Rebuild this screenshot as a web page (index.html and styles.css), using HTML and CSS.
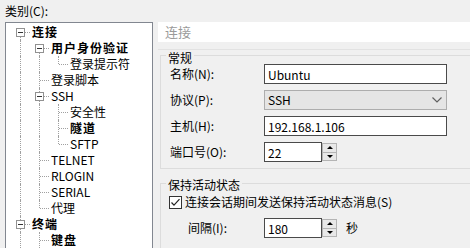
FILE: index.html
```html
<!DOCTYPE html>
<html lang="zh-CN">
<head>
    <meta charset="UTF-8">
    <title>会话属性</title>
    <link rel="stylesheet" href="styles.css">
</head>
<body>
    <div class="dialog">
        <div class="side">
            <div class="side-label">类别(C):</div>
            <div class="tree">
                <div class="row"><span class="g bx down"><i class="box"></i></span><span class="node bold">连接</span></div>
                <div class="row"><span class="g v"></span><span class="g bx down"><i class="box"></i></span><span class="node bold">用户身份验证</span></div>
                <div class="row"><span class="g v"></span><span class="g v"></span><span class="g l"></span><span class="node">登录提示符</span></div>
                <div class="row"><span class="g v"></span><span class="g t"></span><span class="node">登录脚本</span></div>
                <div class="row"><span class="g v"></span><span class="g bx up down"><i class="box"></i></span><span class="node">SSH</span></div>
                <div class="row"><span class="g v"></span><span class="g v"></span><span class="g t"></span><span class="node">安全性</span></div>
                <div class="row"><span class="g v"></span><span class="g v"></span><span class="g t"></span><span class="node bold">隧道</span></div>
                <div class="row"><span class="g v"></span><span class="g v"></span><span class="g l"></span><span class="node">SFTP</span></div>
                <div class="row"><span class="g v"></span><span class="g t"></span><span class="node">TELNET</span></div>
                <div class="row"><span class="g v"></span><span class="g t"></span><span class="node">RLOGIN</span></div>
                <div class="row"><span class="g v"></span><span class="g t"></span><span class="node">SERIAL</span></div>
                <div class="row"><span class="g v"></span><span class="g l"></span><span class="node">代理</span></div>
                <div class="row"><span class="g bx up down"><i class="box"></i></span><span class="node bold">终端</span></div>
                <div class="row"><span class="g v"></span><span class="g t"></span><span class="node bold">键盘</span></div>
            </div>
        </div>

        <div class="main">
            <div class="main-head">连接</div>
            <div class="main-sep"></div>

            <div class="group">
                <div class="group-title">常规</div>
                <div class="field">
                    <label class="field-label">名称(N):</label>
                    <input class="text" type="text" value="Ubuntu">
                </div>
                <div class="field">
                    <label class="field-label">协议(P):</label>
                    <div class="select">
                        <span>SSH</span>
                        <svg width="10" height="6" viewBox="0 0 10 6"><polyline points="0.5,0.5 5,5 9.5,0.5" fill="none" stroke="#606060" stroke-width="1.2"/></svg>
                    </div>
                </div>
                <div class="field">
                    <label class="field-label">主机(H):</label>
                    <input class="text" type="text" value="192.168.1.106">
                </div>
                <div class="field">
                    <label class="field-label">端口号(O):</label>
                    <input class="text short" type="text" value="22">
                    <div class="spin"><span class="spin-up"></span><span class="spin-down"></span></div>
                </div>
            </div>

            <div class="group group-keep">
                <div class="group-title">保持活动状态</div>
                <div class="check-row">
                    <svg class="check" width="13" height="13" viewBox="0 0 13 13">
                        <rect x="0.5" y="0.5" width="12" height="12" fill="#fff" stroke="#333"/>
                        <polyline points="2.5,6.5 5,9.2 10.5,3.2" fill="none" stroke="#222" stroke-width="1.2"/>
                    </svg>
                    <span>连接会话期间发送保持活动状态消息(S)</span>
                </div>
                <div class="field field-sub">
                    <label class="field-label">间隔(I):</label>
                    <input class="text short" type="text" value="180">
                    <div class="spin"><span class="spin-up"></span><span class="spin-down"></span></div>
                    <span class="unit">秒</span>
                </div>
            </div>
        </div>
    </div>
</body>
</html>
```

FILE: styles.css
```css
body {
    margin: 0;
    background-color: #f0f0f0;
    font-family: "Noto Sans CJK SC", sans-serif;
    font-size: 12px;
    line-height: 16px;
    color: #000;
    overflow: hidden;
}

.dialog {
    display: flex;
    width: 470px;
    height: 248px;
    overflow: hidden;
}

/* left: category tree */
.side {
    width: 148px;
    margin-left: 5px;
    flex: none;
}

.side-label {
    height: 22px;
    line-height: 21px;
}

.tree {
    height: 240px;
    background-color: #fff;
    border: 1px solid #828790;
    padding: 1px 0 0 5px;
    overflow: hidden;
}

.row {
    display: flex;
    align-items: center;
    height: 16px;
}

.g {
    position: relative;
    width: 19px;
    height: 16px;
    flex: none;
}

/* dotted guide lines */
.g::before,
.g::after {
    content: "";
    position: absolute;
}

.g.v::before,
.g.t::before,
.g.l::before,
.g.bx.up::before,
.g.bx.down::before {
    left: 9px;
    top: 0;
    bottom: 0;
    border-left: 1px dotted #a0a0a0;
}

.g.l::before {
    bottom: 8px;
}

.g.bx.down::before {
    top: 8px;
}

.g.bx.up.down::before {
    top: 0;
}

.g.t::after,
.g.l::after,
.g.bx::after {
    left: 10px;
    top: 8px;
    width: 9px;
    border-top: 1px dotted #a0a0a0;
}

.box {
    position: absolute;
    left: 5px;
    top: 4px;
    width: 7px;
    height: 7px;
    border: 1px solid #919191;
    background-color: #fff;
    z-index: 1;
}

.box::after {
    content: "";
    position: absolute;
    left: 1px;
    top: 3px;
    width: 5px;
    height: 1px;
    background-color: #333;
}

.node {
    margin-left: 2px;
    white-space: nowrap;
}

.node.bold {
    font-weight: 700;
    letter-spacing: 1px;
}

/* right: settings page */
.main {
    flex: 1;
    margin-left: 5px;
    padding-top: 22px;
    min-width: 0;
}

.main-head {
    height: 20px;
    line-height: 20px;
    padding-left: 7px;
    background-color: #fff;
    color: #9a9a9a;
    font-size: 13px;
}

.main-sep {
    height: 1px;
    margin-top: 7px;
    background-color: #e2e2e2;
}

.group {
    margin: 5px -40px 0 2px;
    border: 1px solid #dcdcdc;
}

.group-keep {
    margin-top: 14px;
    height: 80px;
}

.group-title {
    width: fit-content;
    height: 13px;
    line-height: 13px;
    margin: -5px 0 0 5px;
    padding: 0 2px;
    background-color: #f0f0f0;
}

.group-keep .group-title {
    margin-top: -6px;
}

.field {
    display: flex;
    align-items: center;
    height: 20px;
    margin-bottom: 6px;
    padding-left: 9px;
}

.field-label {
    width: 94px;
    flex: none;
}

.field-sub {
    margin-top: 8px;
    padding-left: 27px;
}

.field-sub .field-label {
    width: 76px;
}

.text {
    width: 183px;
    height: 20px;
    box-sizing: border-box;
    margin: 0;
    padding: 0 3px;
    border: 1px solid #4a4a4a;
    background-color: #fff;
    font-family: inherit;
    font-size: 12px;
    color: #000;
    outline: none;
}

.text.short {
    width: 58px;
}

.select {
    display: flex;
    align-items: center;
    justify-content: space-between;
    width: 183px;
    height: 20px;
    box-sizing: border-box;
    padding: 0 4px 0 3px;
    border: 1px solid #adadad;
    background-color: #e5e5e5;
}

.spin {
    display: flex;
    flex-direction: column;
    width: 15px;
    height: 18px;
    box-sizing: border-box;
    border: 1px solid #b4b4b4;
    background-color: #e8e8e8;
}

.spin-up,
.spin-down {
    flex: 1;
    display: flex;
    align-items: center;
    justify-content: center;
}

.spin-up {
    border-bottom: 1px solid #b4b4b4;
}

.spin-up::after,
.spin-down::after {
    content: "";
    border-left: 3px solid transparent;
    border-right: 3px solid transparent;
}

.spin-up::after {
    border-bottom: 3px solid #000;
}

.spin-down::after {
    border-top: 3px solid #000;
}

.unit {
    margin-left: 9px;
}

.check-row {
    display: flex;
    align-items: center;
    height: 16px;
    margin-top: 3px;
    padding-left: 8px;
}

.check {
    flex: none;
    margin-right: 3px;
}
```
